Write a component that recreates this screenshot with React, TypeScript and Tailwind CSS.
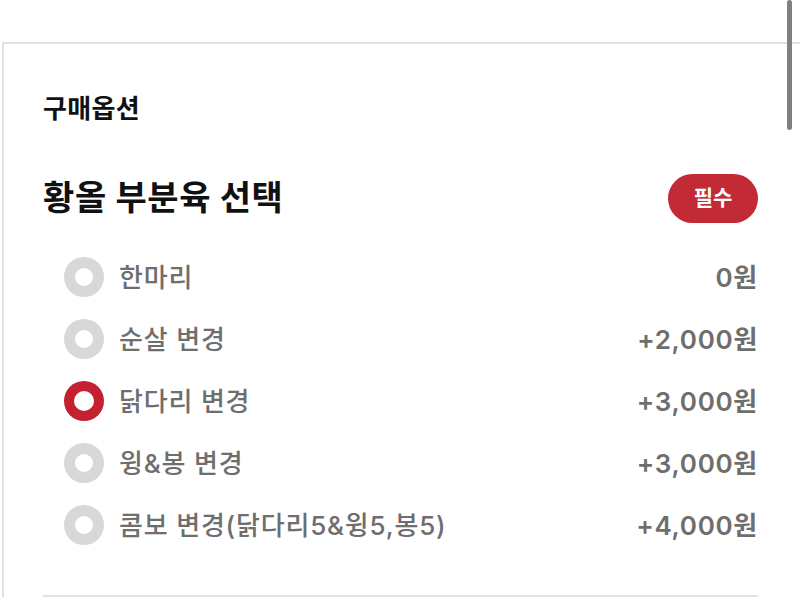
import React, { useState } from 'react';

const options = [
  { label: '한마리', price: '0원' },
  { label: '순살 변경', price: '+2,000원' },
  { label: '닭다리 변경', price: '+3,000원' },
  { label: '윙&봉 변경', price: '+3,000원' },
  { label: '콤보 변경(닭다리5&윙5,봉5)', price: '+4,000원' },
];

const Radio = ({ checked }: { checked: boolean }) => (
  <span
    className={`flex h-10 w-10 shrink-0 items-center justify-center rounded-full ${
      checked ? 'bg-[#c3212f]' : 'bg-[#d8d8d8]'
    }`}
  >
    <span className={`rounded-full bg-white ${checked ? 'h-[20px] w-[20px]' : 'h-[18px] w-[18px]'}`} />
  </span>
);

export default function App() {
  const [selected, setSelected] = useState(2);

  return (
    <div
      className="relative h-[611px] w-[800px] overflow-hidden bg-white"
      style={{ fontFamily: 'Inter, "Noto Sans CJK KR", "Noto Sans", sans-serif' }}
    >
      <div className="h-[42px]" />

      <section className="ml-[2px] border-l-2 border-t-2 border-[#e0e0e0] pl-[39px] pr-[42px] pt-[48px]">
        <h2 className="text-[26px] font-semibold leading-[34px] tracking-[0.3px] text-[#111]">구매옵션</h2>

        <div className="mt-[47px] flex h-[50px] items-center justify-between">
          <h3 className="text-[34px] font-bold leading-[40px] tracking-[0.6px] text-[#111]">황올 부분육 선택</h3>
          <span className="flex h-[49px] w-[90px] items-center justify-center rounded-full bg-[#c22a35] text-[21px] font-bold text-white">
            필수
          </span>
        </div>

        <ul className="mt-[23px]">
          {options.map((opt, i) => (
            <li
              key={opt.label}
              onClick={() => setSelected(i)}
              className="flex h-[62px] cursor-pointer items-center justify-between"
            >
              <div className="ml-[21px] flex items-center gap-[15px]">
                <Radio checked={selected === i} />
                <span className="text-[26px] font-medium tracking-[0.8px] text-[#6e6e6e]">{opt.label}</span>
              </div>
              <span className="text-[26px] font-semibold tracking-[0.7px] text-[#6e6e6e]">{opt.price}</span>
            </li>
          ))}
        </ul>

        <div className="mt-[39px] h-[2px] bg-[#e2e2e2]" />
      </section>

      {/* scroll thumb */}
      <div className="absolute left-[787px] top-0 h-[130px] w-[5px] rounded-full bg-[#808080]" />
    </div>
  );
}
